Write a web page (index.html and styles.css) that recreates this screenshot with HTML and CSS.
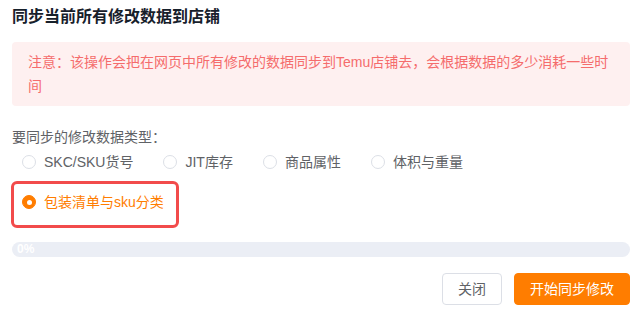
FILE: index.html
```html
<!DOCTYPE html>
<html lang="zh-CN">
<head>
<meta charset="utf-8">
<link rel="stylesheet" href="styles.css">
</head>
<body>
<div class="dialog">
  <h1 class="title">同步当前所有修改数据到店铺</h1>
  <div class="alert">注意：该操作会把在网页中所有修改的数据同步到Temu店铺去，会根据数据的多少消耗一些时间</div>
  <div class="label">要同步的修改数据类型：</div>
  <div class="radios">
    <label class="radio"><span class="circle"></span><span class="text">SKC/SKU货号</span></label>
    <label class="radio"><span class="circle"></span><span class="text">JIT库存</span></label>
    <label class="radio"><span class="circle"></span><span class="text">商品属性</span></label>
    <label class="radio"><span class="circle"></span><span class="text">体积与重量</span></label>
    <label class="radio checked"><span class="circle"></span><span class="text">包装清单与sku分类</span><span class="highlight"></span></label>
  </div>
  <div class="progress"><span class="progress-text">0%</span></div>
  <div class="footer">
    <button class="btn">关闭</button>
    <button class="btn primary">开始同步修改</button>
  </div>
</div>
</body>
</html>
```
FILE: styles.css
```css
html, body {
  margin: 0;
  padding: 0;
  background: #ffffff;
}
body {
  font-family: "Liberation Sans", "Noto Sans CJK SC", sans-serif;
  font-size: 14px;
  color: #606266;
}
.dialog {
  padding: 5px 12px 0 12px;
  display: flex;
  flex-direction: column;
}
.title {
  margin: 0;
  font-size: 16px;
  line-height: 24px;
  font-weight: bold;
  color: #17202b;
}
.alert {
  margin-top: 13px;
  background: #fef0f0;
  color: #f56c6c;
  border-radius: 4px;
  padding: 8px 16px;
  line-height: 24px;
  font-size: 14px;
}
.label {
  margin-top: 21px;
  line-height: 20px;
}
.radios {
  margin-top: 5px;
  padding-left: 10px;
  display: flex;
  flex-wrap: wrap;
  row-gap: 20px;
  width: 560px;
}
.radio {
  position: relative;
  display: inline-flex;
  align-items: center;
  height: 20px;
  margin-right: 30px;
  color: #606266;
  line-height: 20px;
}
.circle {
  width: 14px;
  height: 14px;
  box-sizing: border-box;
  border: 1px solid #dcdfe6;
  border-radius: 50%;
  background: #fff;
  display: inline-flex;
  align-items: center;
  justify-content: center;
}
.text {
  padding-left: 8px;
}
.checked {
  color: #ff7d00;
}
.checked .circle {
  border-color: #ff7d00;
  background: #ff7d00;
}
.checked .circle::after {
  content: "";
  width: 5px;
  height: 5px;
  border-radius: 50%;
  background: #fff;
}
.highlight {
  position: absolute;
  left: -11px;
  top: -11px;
  width: 168px;
  height: 47px;
  box-sizing: border-box;
  border: 3px solid #f24b4b;
  border-radius: 6px;
  pointer-events: none;
}
.progress {
  margin-top: 30px;
  height: 15px;
  border-radius: 8px;
  background: #ebeef5;
  display: flex;
  align-items: center;
}
.progress-text {
  padding-left: 5px;
  color: #ffffff;
  font-size: 12px;
  font-weight: bold;
  line-height: 15px;
}
.footer {
  margin-top: 16px;
  display: flex;
  justify-content: flex-end;
  gap: 12px;
}
.btn {
  height: 32px;
  padding: 0 15px;
  box-sizing: border-box;
  border: 1px solid #dcdfe6;
  border-radius: 4px;
  background: #fff;
  color: #606266;
  font-family: "Liberation Sans", "Noto Sans CJK SC", sans-serif;
  font-size: 14px;
  line-height: 30px;
}
.btn.primary {
  background: #ff7d00;
  border-color: #ff7d00;
  color: #fff;
}
```
